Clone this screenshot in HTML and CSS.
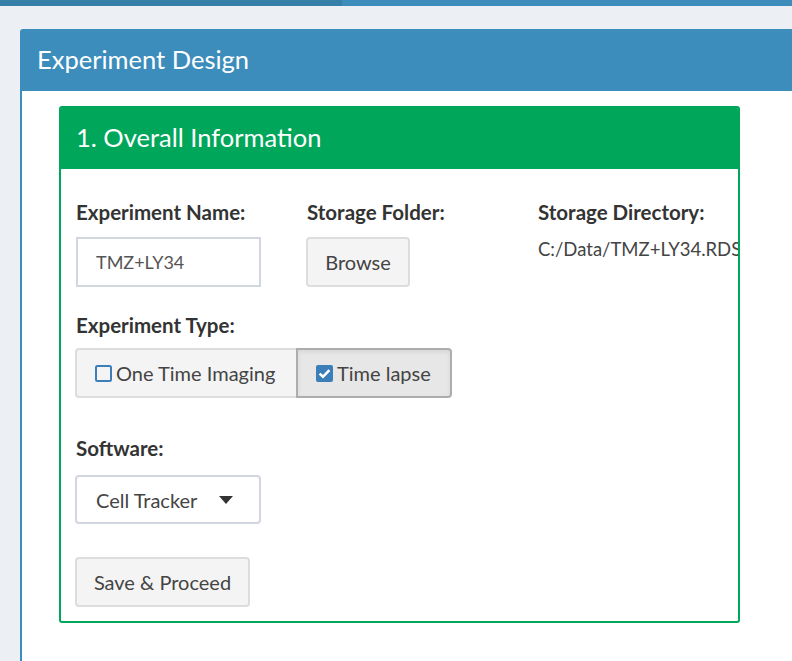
FILE: index.html
```html
<!DOCTYPE html>
<html>
<head>
<meta charset="utf-8">
<link rel="stylesheet" href="styles.css">
</head>
<body>
<div class="topbar"><div class="topbar-left"></div><div class="topbar-right"></div></div>
<div class="content">
  <div class="box">
    <div class="box-header"><h3 class="box-title">Experiment Design</h3></div>
    <div class="box-body">
      <div class="inner-box">
        <div class="inner-header"><h3 class="inner-title">1. Overall Information</h3></div>
        <div class="inner-body">
          <div class="row3">
            <div class="col">
              <div class="label">Experiment Name:</div>
              <div class="text-input">TMZ+LY34</div>
            </div>
            <div class="col">
              <div class="label">Storage Folder:</div>
              <div class="btn btn-browse">Browse</div>
            </div>
            <div class="col col-last">
              <div class="label">Storage Directory:</div>
              <div class="dir-text">C:/Data/TMZ+LY34.RDS</div>
            </div>
          </div>
          <div class="label label-type">Experiment Type:</div>
          <div class="btn-group">
            <div class="btn-seg seg-first">
              <svg class="cb" width="17" height="17" viewBox="0 0 17 17"><rect x="1" y="1" width="15" height="15" rx="1.5" fill="none" stroke="#3c7fb8" stroke-width="2"/></svg>
              <span>One Time Imaging</span>
            </div>
            <div class="btn-seg seg-active">
              <svg class="cb" width="17" height="17" viewBox="0 0 17 17"><rect x="0" y="0" width="17" height="17" rx="2" fill="#3c7fb8"/><path d="M3.6 8.6 L7 11.8 L13.4 5.2" fill="none" stroke="#fff" stroke-width="2.6"/></svg>
              <span>Time lapse</span>
            </div>
          </div>
          <div class="label label-soft">Software:</div>
          <div class="select"><span>Cell Tracker</span><span class="caret"></span></div>
          <div class="btn btn-save">Save &amp; Proceed</div>
        </div>
      </div>
    </div>
  </div>
</div>
</body>
</html>
```
FILE: styles.css
```css
html, body {
  margin: 0;
  padding: 0;
  height: 100%;
  overflow: hidden;
}
body {
  background: #ecf0f5;
  font-family: Lato, "Liberation Sans", sans-serif;
  color: #333;
}
.topbar {
  display: flex;
  height: 6px;
}
.topbar-left {
  width: 342px;
  background: #367fa9;
}
.topbar-right {
  flex: 1;
  background: #3c8dbc;
}
.content {
  padding: 23px 0 0 20px;
}
.box {
  width: 820px;
}
.box-header {
  box-sizing: border-box;
  height: 62px;
  background: #3c8dbc;
  border-top-left-radius: 3px;
  display: flex;
  align-items: center;
  padding: 0 0 3px 17px;
}
.box-title {
  margin: 0;
  font-weight: 400;
  font-size: 25.5px;
  color: #fff;
}
.box-body {
  background: #fff;
  border-left: 2px solid #3c8dbc;
  padding: 15px 0 60px 37px;
}
.inner-box {
  width: 677px;
  border: 2px solid #00a65a;
  border-radius: 3px;
  overflow: hidden;
}
.inner-header {
  box-sizing: border-box;
  height: 61px;
  background: #00a65a;
  display: flex;
  align-items: center;
  padding: 0 0 3px 15px;
}
.inner-title {
  margin: 0;
  font-weight: 400;
  font-size: 25.5px;
  color: #fff;
}
.inner-body {
  padding: 31px 0 14px 15px;
}
.row3 {
  display: grid;
  grid-template-columns: 231px 231px 1fr;
}
.col-last {
  white-space: nowrap;
}
.label {
  font-weight: 700;
  font-size: 20.5px;
  line-height: 24px;
  height: 24px;
  margin-bottom: 13px;
  color: #333;
}
.text-input {
  box-sizing: border-box;
  width: 185px;
  height: 50px;
  border: 2px solid #d2d6de;
  padding-left: 18px;
  display: flex;
  align-items: center;
  font-size: 18px;
  color: #555;
}
.btn {
  box-sizing: border-box;
  height: 50px;
  display: inline-flex;
  align-items: center;
  justify-content: center;
  background: #f4f4f4;
  border: 2px solid #ddd;
  border-radius: 4px;
  font-size: 20px;
  color: #444;
}
.btn-browse {
  width: 104px;
  margin-left: -1px;
}
.dir-text {
  font-size: 18.5px;
  line-height: 24px;
  margin-top: 3px;
  color: #444;
}
.label-type {
  margin-top: 26px;
  margin-bottom: 11px;
}
.btn-group {
  display: flex;
  margin-left: -1px;
}
.btn-seg {
  box-sizing: border-box;
  height: 50px;
  display: flex;
  align-items: center;
  gap: 4px;
  border: 2px solid #ddd;
  font-size: 20px;
  color: #444;
}
.seg-first {
  width: 221px;
  padding-left: 18px;
  background: #f4f4f4;
  border-radius: 4px 0 0 4px;
  border-right: none;
}
.seg-active {
  width: 156px;
  padding-left: 18px;
  background: #e7e7e7;
  border-color: #adadad;
  border-radius: 0 4px 4px 0;
  box-shadow: inset 0 2px 4px rgba(0,0,0,0.08);
}
.cb {
  flex: none;
}
.label-soft {
  margin-top: 38px;
  margin-bottom: 15px;
}
.select {
  box-sizing: border-box;
  width: 186px;
  height: 49px;
  margin-left: -1px;
  border: 2px solid #d2d6de;
  border-radius: 4px;
  display: flex;
  align-items: center;
  justify-content: space-between;
  padding: 0 26px 0 19px;
  font-size: 20px;
  color: #444;
}
.caret {
  width: 0;
  height: 0;
  border-left: 7px solid transparent;
  border-right: 7px solid transparent;
  border-top: 8px solid #333;
}
.btn-save {
  display: flex;
  width: 175px;
  margin-top: 33px;
  margin-left: -1px;
}
```
